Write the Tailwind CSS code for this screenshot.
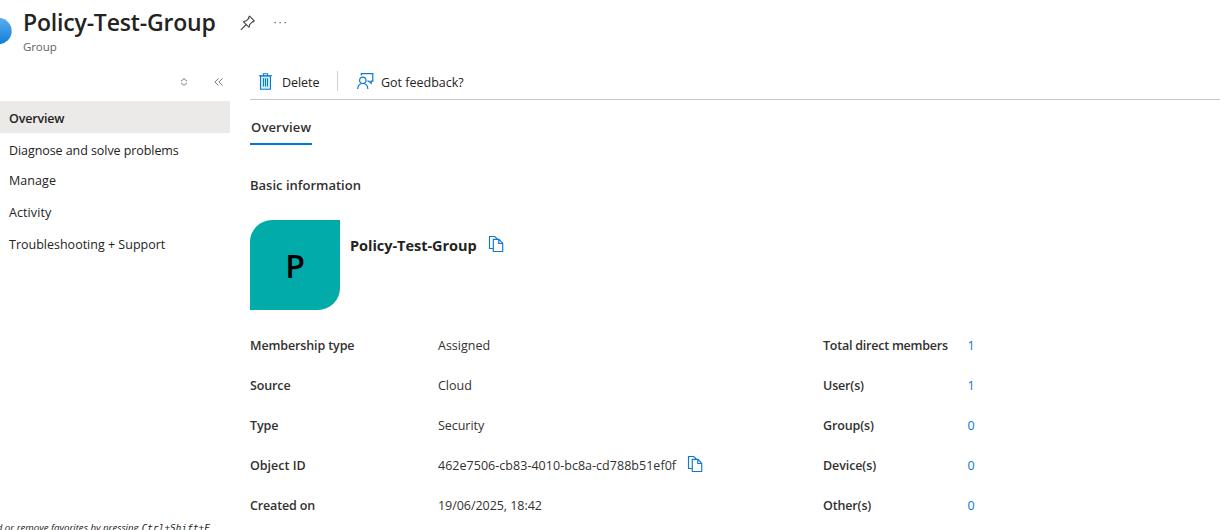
<!DOCTYPE html>
<html lang="en">
<head>
<meta charset="utf-8">
<title>Policy-Test-Group</title>
<script src="https://cdn.jsdelivr.net/npm/@tailwindcss/browser@4"></script>
</head>
<body class="bg-white">
<div class="flex h-[530px] w-[1220px] flex-col overflow-hidden font-['Open_Sans','Noto_Sans',sans-serif] text-[12.5px] leading-5 text-[#323130]">
  <header class="flex h-[65px] shrink-0">
    <svg class="mt-[18px] h-[26px] w-3 shrink-0" viewBox="0 0 12 26">
      <defs><linearGradient id="g" x1="0" y1="0" x2="0" y2="1"><stop offset="0" stop-color="#5eaeee"/><stop offset="1" stop-color="#0f7ddb"/></linearGradient></defs>
      <circle cx="-1.5" cy="13" r="13.2" fill="url(#g)"/>
    </svg>
    <div class="ml-[11px] flex flex-col whitespace-nowrap">
      <div class="flex h-[37px] items-start">
        <h1 class="mt-[6px] w-[217px] text-[23px] font-semibold leading-8 tracking-[-0.18px] text-[#242322]">Policy-Test-Group</h1>
        <svg class="mt-[15px] size-4" viewBox="0 0 16 16" fill="none" stroke="#484644" stroke-width="1.1" stroke-linejoin="round"><path d="M9.6 1.2 14.3 5.9 13.2 7 12.6 6.6 9.6 9.7Q9.8 11.3 8.9 12.2L3.5 6.8Q4.6 5.9 6 6.1L9.1 3 8.5 2.3ZM6.2 9.5 .9 14.8"/></svg>
        <svg class="ml-[18px] mt-[15px] h-4 w-3" viewBox="0 0 12 16" fill="#605e5c"><path d="M0.5 7h1.3v1.3H.5zM5.5 7h1.3v1.3H5.5zM10.5 7h1.3v1.3h-1.3z"/></svg>
      </div>
      <p class="text-[11.5px] leading-5 tracking-[-0.1px] text-[#646260]">Group</p>
    </div>
  </header>
  <div class="flex min-h-0 grow">
    <aside class="flex w-[230px] shrink-0 flex-col">
      <div class="flex h-9 shrink-0 items-center justify-end gap-[26px] pr-[7px]">
        <svg class="-mt-[3px] h-2 w-2" viewBox="0 0 8 8" fill="none" stroke="#7a7876" stroke-width="1"><path d="M1 3.2 4 .6 7 3.2M1 4.8 4 7.4 7 4.8"/></svg>
        <svg class="-mt-[3px] h-2 w-[9px]" viewBox="0 0 9 8" fill="none" stroke="#7a7876" stroke-width="1"><path d="M4.5 .4 .9 4 4.5 7.6M8.5 .4 4.9 4 8.5 7.6"/></svg>
      </div>
      <nav class="flex flex-col whitespace-nowrap text-[#242322]">
        <a class="flex h-8 items-center bg-[#ebeae9] pl-[9px] pt-1 font-semibold tracking-[-0.17px]">Overview</a>
        <a class="flex h-[33px] items-center pl-[9px] pt-0.5 tracking-[-0.07px]">Diagnose and solve problems</a>
        <a class="flex h-[30px] items-center pl-[9px] tracking-[0.08px]">Manage</a>
        <a class="flex h-8 items-center pl-[9px] pt-0.5 tracking-[0.08px]">Activity</a>
        <a class="flex h-8 items-center pl-[9px] pt-0.5">Troubleshooting + Support</a>
      </nav>
      <p class="-mb-[6px] mt-auto flex justify-end whitespace-nowrap pr-5 text-[9.7px] italic leading-4 text-[#242322]">Add or remove favorites by pressing<kbd class="ml-[3px] font-['DejaVu_Sans_Mono',monospace] text-[9.3px] tracking-[0.1px]">Ctrl+Shift+F</kbd></p>
    </aside>
    <main class="flex grow flex-col pl-5">
      <div class="flex h-[35px] shrink-0 items-center border-b border-[#c8c6c4] pl-[9px] text-[#242322]">
        <svg class="-mt-0.5 h-[17px] w-[13px]" viewBox="0 0 13 17" fill="none" stroke="#0f78d4" stroke-width="1.1"><path d="M1.5 3h10v13.3h-10z" fill="#c9f1fb"/><path d="M0 2.8h13M4.4 2.5V.7h4.2v1.8M4.5 5.2v8.4M6.5 5.2v8.4M8.5 5.2v8.4"/></svg>
        <span class="ml-2.5 w-[38px] pt-0.5 tracking-[-0.06px]">Delete</span>
        <span class="-mt-0.5 ml-[17px] h-5 w-px bg-[#d2d0ce]"></span>
        <svg class="-mt-0.5 ml-[19px] h-[18px] w-[17px]" viewBox="0 0 17 18" fill="none" stroke="#0f78d4" stroke-width="1.2"><circle cx="5.8" cy="8.3" r="3.2"/><path d="M.7 17C.9 13.3 3 11.5 5.8 11.5S10.7 13.3 10.9 17M4.3 3.5V1.6h11.5v7.5h-1.7v2.3l-2.3-2.3h-1.5"/></svg>
        <span class="ml-[7px] pt-0.5">Got feedback?</span>
      </div>
      <div class="mt-[11px] w-[62px] border-b-2 border-[#0078d4] pb-[6px] pl-px pt-[6px] text-[13px] font-semibold tracking-[0.15px]">Overview</div>
      <h2 class="mt-[30px] text-[13px] font-semibold">Basic information</h2>
      <div class="mt-[25px] flex">
        <div class="flex size-[90px] items-center justify-center rounded-br-[22px] rounded-tl-[22px] bg-[#00abaa] pt-px text-[32px] font-semibold text-black">P</div>
        <div class="ml-2.5 mt-[15px] flex h-5 items-center">
          <span class="w-[138px] whitespace-nowrap pt-0.5 text-[14.5px] font-bold tracking-[-0.03px] text-[#242322]">Policy-Test-Group</span>
          <svg class="-mt-0.5 h-[18px] w-4" viewBox="0 0 16 18" fill="none" stroke="#0f78d4" stroke-width="1.15"><path d="M5 13.5H1.5v-12h5.2L9.5 4.2M5.3 4.3h5.7l3.7 3.9v8.3H5.3ZM10.8 4.5v4h3.8"/></svg>
        </div>
      </div>
      <div class="mt-4 flex whitespace-nowrap">
        <dl class="grid w-[573px] auto-rows-[40px] grid-cols-[188px_1fr] items-center">
          <dt class="font-semibold tracking-[-0.12px]">Membership type</dt><dd>Assigned</dd>
          <dt class="font-semibold tracking-[-0.12px]">Source</dt><dd>Cloud</dd>
          <dt class="font-semibold tracking-[-0.07px]">Type</dt><dd class="tracking-[-0.05px]">Security</dd>
          <dt class="font-semibold">Object ID</dt>
          <dd class="flex items-center"><span class="w-[249px] tracking-[0.03px]">462e7506-cb83-4010-bc8a-cd788b51ef0f</span>
            <svg class="-mt-1 h-[18px] w-4" viewBox="0 0 16 18" fill="none" stroke="#0f78d4" stroke-width="1.15"><path d="M5 13.5H1.5v-12h5.2L9.5 4.2M5.3 4.3h5.7l3.7 3.9v8.3H5.3ZM10.8 4.5v4h3.8"/></svg></dd>
          <dt class="font-semibold tracking-[-0.15px]">Created on</dt><dd class="tracking-[-0.05px]">19/06/2025, 18:42</dd>
        </dl>
        <dl class="grid auto-rows-[40px] grid-cols-[144.4px_auto] items-center">
          <dt class="font-semibold tracking-[-0.23px]">Total direct members</dt><dd class="text-[#0078d4]">1</dd>
          <dt class="font-semibold tracking-[-0.15px]">User(s)</dt><dd class="text-[#0078d4]">1</dd>
          <dt class="font-semibold tracking-[-0.13px]">Group(s)</dt><dd class="text-[#0078d4]">0</dd>
          <dt class="font-semibold tracking-[-0.1px]">Device(s)</dt><dd class="text-[#0078d4]">0</dd>
          <dt class="font-semibold tracking-[-0.15px]">Other(s)</dt><dd class="text-[#0078d4]">0</dd>
        </dl>
      </div>
    </main>
  </div>
</div>
</body>
</html>
